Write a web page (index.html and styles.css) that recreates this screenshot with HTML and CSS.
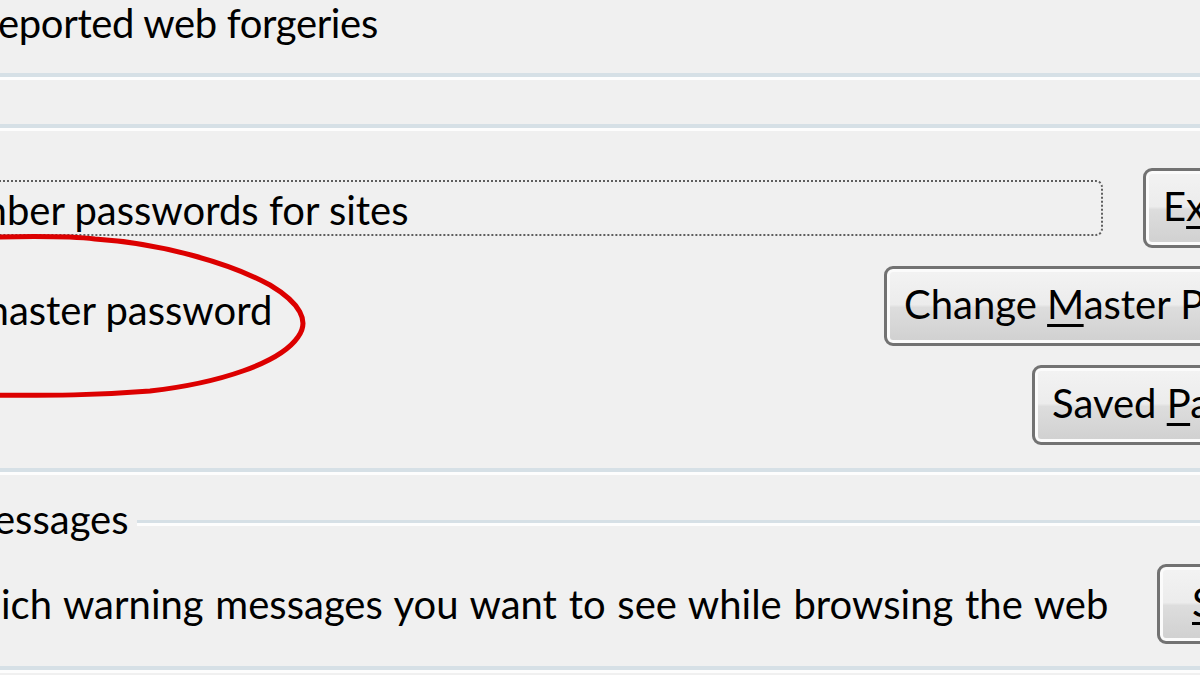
FILE: index.html
```html
<!DOCTYPE html>
<html lang="en">
<head>
<meta charset="utf-8">
<title>Options - Security</title>
<link rel="stylesheet" href="styles.css">
</head>
<body>
<div class="page">
  <div class="row row-forgery"><span class="txt"><span class="pre">Block r</span>eported web forgeries</span></div>
  <div class="sep sep-a"></div>
  <div class="sep sep-b"></div>

  <section class="passwords">
    <div class="pw-row pw-row1">
      <div class="focus"><span class="txt"><span class="pre">Reme</span>mber passwords for sites</span></div>
      <button class="btn btn-exc">E<u>x</u>ceptions…</button>
    </div>
    <div class="pw-row pw-row2">
      <div class="master"><span class="txt"><span class="pre">Use a </span>master password</span></div>
      <button class="btn btn-change">Change <u>M</u>aster Password…</button>
    </div>
    <div class="pw-row pw-row3">
      <button class="btn btn-saved">Saved <u>P</u>asswords…</button>
    </div>
  </section>

  <div class="sep sep-c"></div>

  <section class="warnings">
    <div class="caption"><span class="txt"><span class="pre">Warning M</span>essages</span><span class="cap-line"></span></div>
    <div class="warn-row">
      <div class="warn-text"><span class="txt"><span class="pre">Choose wh</span>ich warning messages you want to see while browsing the web</span></div>
      <button class="btn btn-settings"><u>S</u>ettings…</button>
    </div>
  </section>

  <div class="sep sep-d"></div>
</div>

<svg class="circle" width="320" height="180" viewBox="0 0 320 180" aria-hidden="true">
  <path d="M -40 13 C 20 11, 70 11, 95 14 C 160 18, 230 38, 270 60 C 300 78, 310 96, 298 112 C 280 138, 220 158, 150 166 C 100 170, 60 171, -40 170" fill="none" stroke="#dc0000" stroke-width="5"/>
</svg>
</body>
</html>
```

FILE: styles.css
```css
html, body {
  margin: 0;
  padding: 0;
}

body {
  width: 1200px;
  height: 675px;
  overflow: hidden;
  background: #f0f0f0;
  color: #000;
  font-family: Lato, "Open Sans", "Noto Sans", sans-serif;
  font-size: 40px;
  line-height: 48px;
  position: relative;
}

.page {
  width: 1200px;
}

.txt {
  white-space: nowrap;
  display: inline-flex;
  align-items: baseline;
}

/* hidden prefix of a label that lies off the left edge */
.pre {
  display: inline-flex;
  justify-content: flex-end;
  width: 0;
  white-space: pre;
}

.row {
  height: 48px;
  display: flex;
  align-items: center;
}

.row-forgery {
  margin-top: -1px;
  margin-left: -2px;
  letter-spacing: -0.35px;
}

.sep {
  height: 0;
  border-top: 4px solid #d6e0e6;
  border-bottom: 3px solid #fdfdfd;
}

.sep-a { margin-top: 26px; }
.sep-b { margin-top: 44px; }
.sep-c { margin-top: 23px; }
.sep-d { margin-top: 22px; }

.passwords {
  margin-top: 37px;
}

.pw-row {
  display: flex;
  align-items: center;
  height: 80px;
}

.pw-row2 { margin-top: 18px; }
.pw-row3 { margin-top: 19px; }

.focus {
  box-sizing: border-box;
  margin-left: -40px;
  width: 1143px;
  height: 56px;
  padding-left: 12px;
  padding-top: 4px;
  border: 2px dotted #5e5e5e;
  border-radius: 7px;
  display: flex;
  align-items: center;
  flex: none;
}

.master {
  box-sizing: border-box;
  margin-left: -24px;
  width: 908px;
  padding-top: 8px;
  flex: none;
}

.btn {
  flex: none;
  box-sizing: border-box;
  height: 80px;
  padding: 0 17px 5px;
  margin: 0;
  font: inherit;
  color: #000;
  white-space: nowrap;
  text-align: left;
  border: 3px solid #727272;
  border-radius: 9px;
  box-shadow: inset 0 0 0 3px #fbfbfb;
  background: linear-gradient(to bottom, #f3f3f3 0%, #ececec 48%, #dddddd 52%, #d0d0d0 100%);
}

.btn u {
  text-decoration-thickness: 3px;
  text-underline-offset: 5px;
}

.btn-exc { margin-left: 40px; }
.btn-change { margin-left: 0; }
.btn-saved { margin-left: 1032px; }
.btn-settings { padding-left: 32px; }

.warnings {
  margin-top: 20px;
}

.caption {
  height: 48px;
  display: flex;
  align-items: center;
  margin-left: -6px;
}

.cap-line {
  flex: 1;
  margin-left: 8px;
  margin-top: 8px;
  height: 0;
  border-top: 3px solid #d6e0e6;
  border-bottom: 3px solid #fdfdfd;
}

.warn-row {
  margin-top: 21px;
  height: 80px;
  display: flex;
  align-items: center;
}

.warn-text {
  box-sizing: border-box;
  width: 1157px;
  padding-left: 1px;
  word-spacing: 1.5px;
  flex: none;
}

.circle {
  position: absolute;
  left: 0;
  top: 225px;
  pointer-events: none;
}
```
